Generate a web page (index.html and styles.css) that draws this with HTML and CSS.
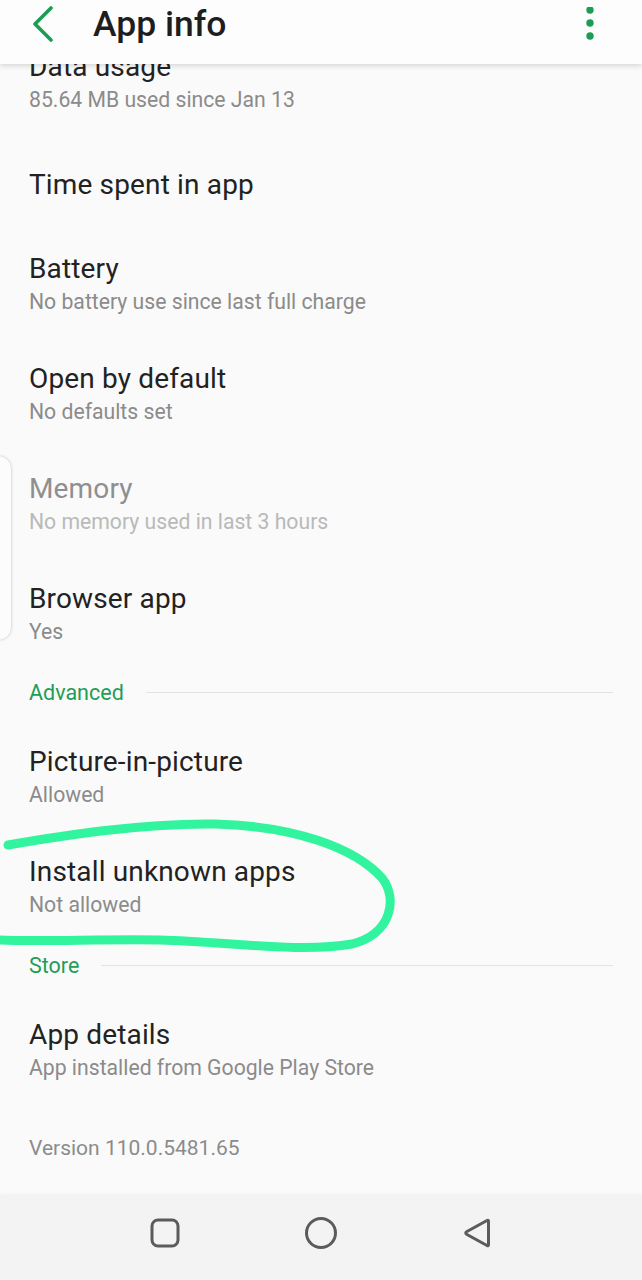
FILE: index.html
```html
<!DOCTYPE html>
<html lang="en">
<head>
    <meta charset="UTF-8">
    <meta name="viewport" content="width=device-width, initial-scale=1.0">
    <title>App info</title>
    <link rel="stylesheet" href="styles.css">
</head>
<body>

<div class="screen">
    <header class="app-bar">
        <svg class="back-icon" width="24" height="36" viewBox="0 0 24 36">
            <polyline points="20,2 4,18 20,34" fill="none" stroke="#1d9c55" stroke-width="3.6" stroke-linecap="round" stroke-linejoin="round"/>
        </svg>
        <h1 class="app-bar-title">App info</h1>
        <svg class="menu-icon" width="10" height="34" viewBox="0 0 10 34">
            <circle cx="5" cy="3" r="3.7" fill="#1d9c55"/>
            <circle cx="5" cy="16" r="3.7" fill="#1d9c55"/>
            <circle cx="5" cy="29" r="3.7" fill="#1d9c55"/>
        </svg>
    </header>

    <main class="prefs">
        <div class="pref">
            <p class="pref-title">Data usage</p>
            <p class="pref-summary">85.64 MB used since Jan 13</p>
        </div>
        <div class="pref single">
            <p class="pref-title">Time spent in app</p>
        </div>
        <div class="pref">
            <p class="pref-title">Battery</p>
            <p class="pref-summary">No battery use since last full charge</p>
        </div>
        <div class="pref">
            <p class="pref-title">Open by default</p>
            <p class="pref-summary">No defaults set</p>
        </div>
        <div class="pref disabled">
            <p class="pref-title">Memory</p>
            <p class="pref-summary">No memory used in last 3 hours</p>
        </div>
        <div class="pref">
            <p class="pref-title">Browser app</p>
            <p class="pref-summary">Yes</p>
        </div>

        <div class="category">
            <span class="category-title">Advanced</span>
        </div>
        <div class="pref">
            <p class="pref-title">Picture-in-picture</p>
            <p class="pref-summary">Allowed</p>
        </div>
        <div class="pref">
            <p class="pref-title">Install unknown apps</p>
            <p class="pref-summary">Not allowed</p>
        </div>

        <div class="category">
            <span class="category-title">Store</span>
        </div>
        <div class="pref">
            <p class="pref-title">App details</p>
            <p class="pref-summary">App installed from Google Play Store</p>
        </div>

        <p class="version">Version 110.0.5481.65</p>
    </main>

    <nav class="nav-bar">
        <svg width="32" height="32" viewBox="0 0 32 32">
            <rect x="3" y="3" width="26" height="26" rx="6" fill="none" stroke="#5b5b5b" stroke-width="3"/>
        </svg>
        <svg width="34" height="34" viewBox="0 0 34 34">
            <circle cx="17" cy="17" r="14.5" fill="none" stroke="#5b5b5b" stroke-width="3"/>
        </svg>
        <svg width="32" height="34" viewBox="0 0 32 34">
            <path d="M26 4.5 Q27.5 3.5 27.5 5.5 L27.5 28.5 Q27.5 30.5 26 29.5 L5.5 18.2 Q4 17 5.5 15.8 Z" fill="none" stroke="#5b5b5b" stroke-width="3" stroke-linejoin="round"/>
        </svg>
    </nav>

    <!-- floating side panel handle peeking in from the left edge -->
    <div class="edge-panel"></div>

    <!-- hand-drawn highlight around "Install unknown apps" -->
    <svg class="scribble" width="410" height="150" viewBox="0 810 410 150">
        <path d="M8 845 C 60 836, 140 823, 215 824 C 295 826, 355 848, 382 878 C 398 898, 392 934, 352 944 C 300 953, 230 942, 160 940 C 100 939, 40 942, -2 940" fill="none" stroke="#33f49e" stroke-width="9" stroke-linecap="round" stroke-linejoin="round"/>
    </svg>
</div>

</body>
</html>
```

FILE: styles.css
```css
body {
    margin: 0;
    font-family: Roboto, "Noto Sans", sans-serif;
    background: #fafafa;
}
p {
    margin: 0;
}
.screen {
    position: relative;
    width: 642px;
    height: 1280px;
    display: flex;
    flex-direction: column;
    overflow: hidden;
    background: #fafafa;
}
.app-bar {
    position: relative;
    z-index: 2;
    flex-shrink: 0;
    height: 64px;
    box-sizing: border-box;
    padding-bottom: 16px;
    display: flex;
    align-items: center;
    background: #fdfdfd;
    box-shadow: 0 2px 5px rgba(0, 0, 0, 0.14);
}
.back-icon {
    margin-left: 31px;
}
.app-bar-title {
    margin: 0 0 0 38px;
    font-size: 35.5px;
    font-weight: 500;
    color: #1e1e1e;
    line-height: 40px;
}
.menu-icon {
    margin-left: auto;
    margin-right: 47px;
}
.prefs {
    flex: 1;
    margin-top: -36px;
}
.pref {
    box-sizing: border-box;
    height: 110px;
    padding: 22px 29px;
}
.pref.single {
    height: 92px;
    display: flex;
    align-items: center;
}
.pref-title {
    font-size: 28px;
    letter-spacing: 0.15px;
    line-height: 33px;
    color: #222;
}
.pref-summary {
    font-size: 21.2px;
    line-height: 33px;
    color: #8b8b8b;
}
.disabled .pref-title {
    color: #8f8f8f;
}
.disabled .pref-summary {
    color: #b9b9b9;
}
.category {
    box-sizing: border-box;
    height: 35px;
    margin-bottom: 18px;
    padding: 10px 29px 0;
    display: flex;
    align-items: center;
    gap: 22px;
}
.category::after {
    content: "";
    flex: 1;
    height: 1px;
    background: #e3e3e3;
}
.category-title {
    font-size: 21.5px;
    line-height: 25px;
    color: #1f9d57;
}
.version {
    padding: 26px 29px 0;
    font-size: 21px;
    line-height: 33px;
    color: #8b8b8b;
}
.nav-bar {
    flex-shrink: 0;
    height: 85px;
    display: flex;
    align-items: center;
    justify-content: center;
    gap: 123px;
    background: #f3f3f3;
    box-shadow: 0 -1px 3px rgba(0, 0, 0, 0.03);
}
.nav-bar svg {
    margin-top: -10px;
}
.edge-panel {
    position: absolute;
    left: -22px;
    top: 455px;
    width: 32px;
    height: 184px;
    border: 1.5px solid #e2e2e2;
    border-radius: 14px;
    background: #fcfcfc;
    box-shadow: 1px 0 3px rgba(0, 0, 0, 0.05);
}
.scribble {
    position: absolute;
    left: 0;
    top: 810px;
}
```
